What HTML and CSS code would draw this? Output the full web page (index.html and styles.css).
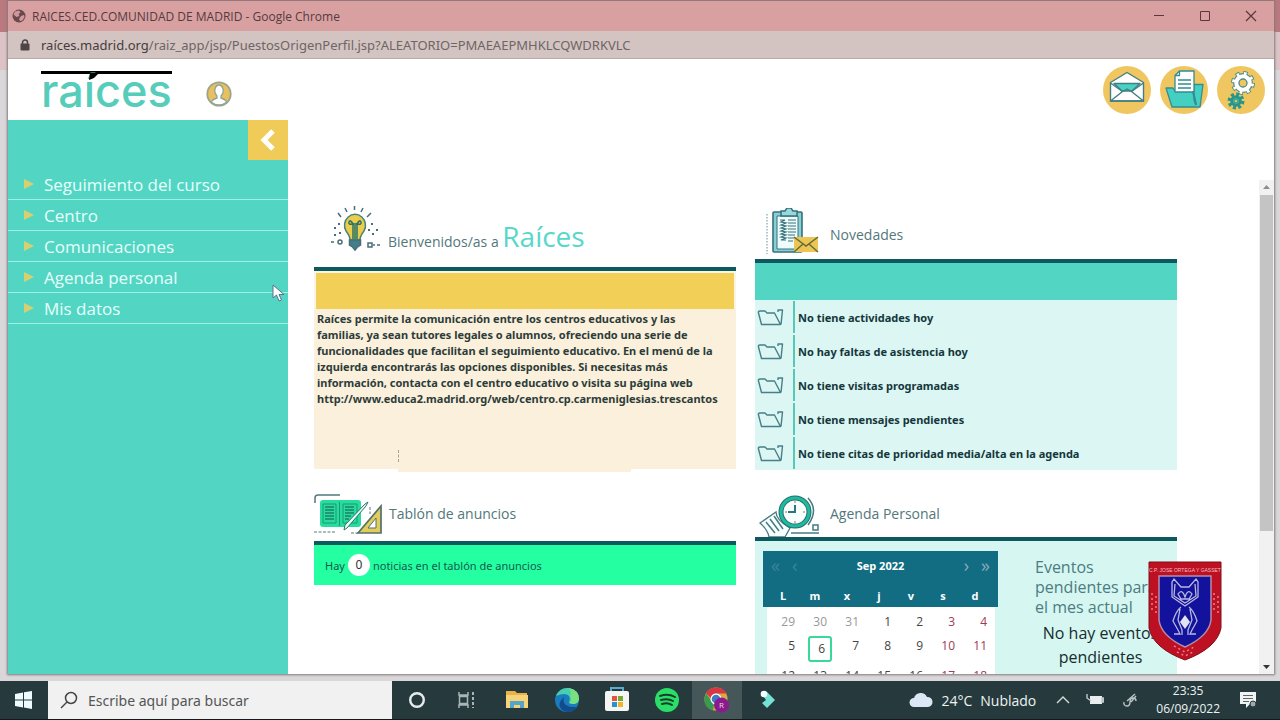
FILE: index.html
```html
<!DOCTYPE html>
<html lang="es">
<head>
<meta charset="utf-8">
<title>RAICES.CED.COMUNIDAD DE MADRID</title>
<link rel="stylesheet" href="styles.css">
</head>
<body>
<svg width="0" height="0" class="defs" aria-hidden="true">
  <symbol id="folder" viewBox="0 0 28 20"><path d="M4.500 17.500L1.500 6q-.5-2 1.500-2h5l2 2h7.500l6 11.500H7q-2 0-2.500 0zM21 5V3h4.500l-1.500 14.500" fill="none" stroke="#477f88" stroke-width="1.400" stroke-linejoin="round"/></symbol>
</svg>
<div class="desktop">
  <div class="window">
    <header class="titlebar">
      <svg class="globe" width="14" height="14" viewBox="0 0 14 14"><circle cx="7" cy="7" r="6.500" fill="#68494e"/><path d="M3 2.500l4-1 1.500 2-2 1.500 1 2-3 1-3-2.500zM9 7l3-1 .5 2-2 3.500-2.500.5-1-2z" fill="#d1989b"/></svg>
      <span class="title">RAICES.CED.COMUNIDAD DE MADRID - Google Chrome</span>
      <button class="winbtn" aria-label="Minimizar"><svg width="12" height="12"><path d="M1 5.500h10" stroke="#5d353b"/></svg></button>
      <button class="winbtn" aria-label="Maximizar"><svg width="12" height="12"><path d="M1.500 1.500h9v9h-9z" fill="none" stroke="#5d353b"/></svg></button>
      <button class="winbtn" aria-label="Cerrar"><svg width="12" height="12"><path d="M1 1l10 10M11 1L1 11" stroke="#5d353b" stroke-width="1.200"/></svg></button>
    </header>
    <div class="addressbar">
      <svg width="10" height="12" viewBox="0 0 10 12"><path d="M2.500 5V3.500a2.500 2.500 0 015 0V5" fill="none" stroke="#4e4547" stroke-width="1.500"/><rect x=".5" y="4.500" width="9" height="7" rx="1" fill="#4e4547"/></svg>
      <span class="url"><b>raíces.madrid.org</b>/raiz_app/jsp/PuestosOrigenPerfil.jsp?ALEATORIO=PMAEAEPMHKLCQWDRKVLC</span>
    </div>
    <div class="apphead">
      <a class="logo" href="#">raíces<svg class="accent" width="12" height="8" viewBox="0 0 12 8"><path d="M3 0h9l-5 5-5 2z"/></svg></a>
      <button class="user" aria-label="Usuario"><svg width="26" height="26" viewBox="0 0 26 26"><circle cx="13" cy="13" r="11.700" fill="#e8c05f" stroke="#9aa58e" stroke-width="1.800"/><path d="M5 21q2-3 6-4v-2q-3-3-2-7 1-4 4-4t4 4q1 4-2 7v2q4 1 6 4-8 6-16 0z" fill="#fff" stroke="#8fa596" stroke-width="1.300"/></svg></button>
      <nav class="tools">
        <button aria-label="Mensajes"><svg width="48" height="48" viewBox="0 0 48 48"><circle cx="24" cy="24" r="24" fill="#f0c660"/><g stroke="#417f83" stroke-width="1.400" stroke-linejoin="round"><path d="M7.500 16.500L24 6.500l16.500 10v18.500h-33z" fill="#fff"/><path d="M11 17.500h26l-8 7.500h-10z" fill="#47d2c4"/><path d="M7.500 17l12 8.500L7.500 35h33l-12-9.500 12-8.500M19.500 25.500L24 23l4.500 2.500" fill="none"/></g></svg></button>
        <button aria-label="Documentos"><svg width="48" height="48" viewBox="0 0 48 48"><circle cx="24" cy="24" r="24" fill="#f0c660"/><g stroke="#358b94" stroke-width="1.300" stroke-linejoin="round"><path d="M6 22h7l2 3h19V18.500h9L40 41H12z" fill="#43d0c1"/><path d="M15 9.500L19.500 5H34v28q0 3 2 5l-3-12H15z" fill="#fff"/><path d="M15 9.500h4.500V5M18 14h13M18 18h13M18 22h13" fill="none"/><path d="M33 25l3 14" stroke-width="2"/></g></svg></button>
        <button aria-label="Ajustes"><svg width="48" height="48" viewBox="0 0 48 48"><circle cx="24" cy="24" r="24" fill="#f0c660"/><g fill="none"><circle cx="26" cy="17" r="9.500" stroke="#54908c" stroke-width="5" stroke-dasharray="4 3.460"/><circle cx="26" cy="17" r="7" stroke="#54908c" stroke-width="6"/><circle cx="26" cy="17" r="9.500" stroke="#fff" stroke-width="3" stroke-dasharray="2.600 4.860" stroke-dashoffset="-.7"/><circle cx="26" cy="17" r="6.500" stroke="#fff" stroke-width="4.500"/><circle cx="26" cy="17" r="4" stroke="#54908c" stroke-width="1.300"/><circle cx="19" cy="35" r="6.700" stroke="#26968b" stroke-width="3.500" stroke-dasharray="3 2.260"/><circle cx="19" cy="35" r="4.300" fill="#59c8aa" stroke="#26968b" stroke-width="3"/><circle cx="19" cy="35" r="2" fill="#d7c467" stroke="#26968b"/></g></svg></button>
      </nav>
    </div>
    <div class="appbody">
      <aside class="sidebar">
        <button class="collapse" aria-label="Ocultar menú"><svg width="18" height="22" viewBox="0 0 18 22"><path d="M14 2L5 11l9 9" fill="none" stroke="#fff" stroke-width="5"/></svg></button>
        <nav class="menu">
          <a href="#">Seguimiento del curso</a>
          <a href="#">Centro</a>
          <a href="#">Comunicaciones</a>
          <a href="#">Agenda personal</a>
          <a href="#">Mis datos</a>
        </nav>
        <svg class="cursor" width="14" height="19" viewBox="0 0 14 19"><path d="M1 1v13l3.500-3 2.500 6 2.500-1-2.500-5.500h5z" fill="#fff" stroke="#58758d"/></svg>
      </aside>
      <main class="content">
        <div class="column">
          <section>
            <h2 class="head head-welcome">
              <svg class="ico-bulb" width="50" height="48" viewBox="0 0 50 48"><g fill="none" stroke="#476e78" stroke-width="1.500"><path d="M14 3l2 4M23.500 1v4M32 3l-2 4M7 8l3 4M40 8l-4 4"/><path d="M3 23h2m2-4h2m-1 9h2M3 30h2m35-11h2m-5 6h2m6 0h2m-6 4h2" stroke-width="2"/><path d="M0 37h3m39 3h2m2 0h3"/><circle cx="9" cy="37" r="2"/><path d="M37 38h4v4h-4z"/><path d="M19 35q0-4-4-9a10.500 11 0 1118 0q-4 5-4 9z" fill="#eccd4b" stroke="#46847b"/><path d="M18.500 35h11v5l-3 2-2.500 3-2.500-3-3-2z" fill="#427f8a"/><path d="M22 34V19q-5 1-4-2t4 2h4q3-5 4-2t-4 2v15M24 20v14" stroke="#287367"/></g></svg>
              <span>Bienvenidos/as a <strong>Raíces</strong></span>
            </h2>
            <div class="panel welcome">
              <div class="band"></div>
              <p>Raíces permite la comunicación entre los centros educativos y las familias, ya sean tutores legales o alumnos, ofreciendo una serie de funcionalidades que facilitan el seguimiento educativo. En el menú de la izquierda encontrarás las opciones disponibles. Si necesitas más información, contacta con el centro educativo o visita su página web http://www.educa2.madrid.org/web/centro.cp.carmeniglesias.trescantos</p>
            </div>
          </section>
          <section>
            <h2 class="head head-board">
              <svg width="70" height="44" viewBox="0 0 70 44"><path d="M1 9V4q0-3 3-3h22" fill="none" stroke="#527a7e" stroke-width="1.500"/><rect x="6" y="6" width="41" height="27" rx="3" fill="#27dd9c"/><path d="M25.500 8v24M9 10h13v19H9zM29 10h14v19H29z" fill="none" stroke="#1a9879"/><path d="M11 13h9M11 16h9M11 19h9M11 22h9M11 25h9M31 13h9M31 16h9M31 19h9M31 22h6M31 25h4" stroke="#1e7f69" stroke-width="1.500"/><path d="M0 38h21M37 39h8M56 13v7" fill="none" stroke="#547b81" stroke-dasharray="3 1.500"/><path d="M44 39L67 12v27z" fill="#e1cc5c" stroke="#52716d" stroke-width="1.700"/><path d="M54 34l8-10v10z" fill="#fff" stroke="#52716d"/><path d="M30 36l1-5L51 10l3-2-2 4-19 22z" fill="#dffff5" stroke="#356f6e"/></svg>
              <span>Tablón de anuncios</span>
            </h2>
            <div class="panel board">Hay <span class="count">0</span> noticias en el tablón de anuncios</div>
          </section>
        </div>
        <div class="column">
          <section>
            <h2 class="head head-news">
              <svg width="54" height="48" viewBox="0 0 54 48"><path d="M2 6v40" stroke="#6c8e96" stroke-dasharray="1.500 1.500"/><rect x="8" y="4" width="29" height="40" rx="1" fill="#8cced5" stroke="#34727c" stroke-width="1.600"/><path d="M12 8h21v33H12z" fill="#effcfd" stroke="#34727c"/><path d="M16 3h4l2-3h4l2 3h4v5H16z" fill="#9ad8db" stroke="#34727c" stroke-width="1.500"/><path d="M15 12h5l-4 2 5 1-5 2 5 1-5 2 5 1-5 2 5 1-5 2 5 1-5 2 5 1-5 2h5M23 12h8M23 15h8M23 18h8M23 21h8M23 24h8M23 27h7M23 30h6M23 33h5" fill="none" stroke="#38717a" stroke-width="1.200"/><path d="M29 29h24v15H29z" fill="#edc554"/><path d="M29 29l12 9 12-9M29 44l9-8m15 8l-9-8" fill="none" stroke="#606c35" stroke-width="1.400"/></svg>
              <span>Novedades</span>
            </h2>
            <div class="panel news">
              <div class="band"></div>
              <ul>
                <li><svg><use href="#folder"/></svg><span>No tiene actividades hoy</span></li>
                <li><svg><use href="#folder"/></svg><span>No hay faltas de asistencia hoy</span></li>
                <li><svg><use href="#folder"/></svg><span>No tiene visitas programadas</span></li>
                <li><svg><use href="#folder"/></svg><span>No tiene mensajes pendientes</span></li>
                <li><svg><use href="#folder"/></svg><span>No tiene citas de prioridad media/alta en la agenda</span></li>
              </ul>
            </div>
          </section>
          <section>
            <h2 class="head head-agenda">
              <svg width="62" height="42" viewBox="0 0 62 42"><path d="M1 28L17 17q0 8 14 16l-5 9H10q-1-7-9-14z" fill="#f8ffff" stroke="#477b80" stroke-width="1.300"/><path d="M7 27l9 11M11 24l9 12M15 21l9 13" stroke="#477b80" stroke-width="1.500"/><circle cx="36" cy="17" r="14" fill="#f7fffd" stroke="#246f70" stroke-width="5"/><circle cx="36" cy="17" r="14" fill="none" stroke="#20b99e" stroke-width="3"/><path d="M36 10v7h-7" fill="none" stroke="#2e757d" stroke-width="2"/><path d="M36 6v2m0 18v2M26 17h2m16 0h2" stroke="#b66"/><path d="M49 3q11 12 0 27M32 38h28M54 30h5v5h-5z" fill="none" stroke="#477b80" stroke-width="1.500"/></svg>
              <span>Agenda Personal</span>
            </h2>
            <div class="panel agenda">
              <div class="calendar">
                <div class="calhead">
                  <button aria-label="Año anterior" class="dim">«</button><button aria-label="Mes anterior" class="dim">‹</button>
                  <span>Sep 2022</span>
                  <button aria-label="Mes siguiente">›</button><button aria-label="Año siguiente">»</button>
                </div>
                <table>
                  <thead><tr><th>L</th><th>m</th><th>x</th><th>j</th><th>v</th><th>s</th><th>d</th></tr></thead>
                  <tbody>
                    <tr><td class="out">29</td><td class="out">30</td><td class="out">31</td><td>1</td><td>2</td><td class="we">3</td><td class="we">4</td></tr>
                    <tr class="current"><td>5</td><td><span class="today">6</span></td><td>7</td><td>8</td><td>9</td><td class="we">10</td><td class="we">11</td></tr>
                    <tr><td>12</td><td>13</td><td>14</td><td>15</td><td>16</td><td class="we">17</td><td class="we">18</td></tr>
                  </tbody>
                </table>
              </div>
              <div class="events">
                <h3>Eventos pendientes para el mes actual</h3>
                <p>No hay eventos pendientes</p>
              </div>
            </div>
          </section>
        </div>
      </main>
      <div class="scrollbar">
        <svg width="15" height="15"><path d="M4 9l3.500-4L11 9z" fill="#8d8d8d"/></svg>
        <div class="thumb"></div>
        <svg width="15" height="15"><path d="M4 6l3.500 4L11 6z" fill="#333"/></svg>
      </div>
    </div>
  </div>
  <svg class="crest" width="74" height="100" viewBox="0 0 74 100"><path d="M1 1h72v66q-4 20-36 32Q5 87 1 67z" fill="#bd1022" stroke="#7d101a"/><path d="M11 15h52v44q-2 16-26 27Q13 75 11 59z" fill="#12129c" stroke="#b58ea6" stroke-width="1.500"/><text x="37" y="11" text-anchor="middle" class="cresttext">C.P. JOSE ORTEGA Y GASSET</text><g fill="none" stroke="#b9b8df" stroke-width="1.300"><path d="M24 21l2-3 7 8h8l7-8 2 3v15L37 45 24 36zM27 23l-1 12 11 7 11-7-1-12M30 33q4-6 7 3 3-9 7-3l-3 5h-8zM33 46q-5 4-8 14l5 9 2 4h-6m15-27q5 4 8 14l-5 9-2 4h6M32 48l-2 11 4 10v5M42 48l2 11-4 10v5"/></g><path d="M37 54l5 7-5 7-5-7z" fill="#e1e3f2"/><g fill="none" stroke="#df8187" stroke-width="1.500" stroke-dasharray="2 3"><path d="M4 32v20M8 35v17M66 32v20M70 35v17M26 85l11 6 11-6M29 91l8 4 8-4"/></g></svg>
</div>
<footer class="taskbar">
  <button class="start" aria-label="Inicio"><svg width="18" height="18" viewBox="0 0 18 18"><path d="M0 3l8-1.500V8.500H0zM9 1.300L17 0v8.500H9zM0 9.500h8v7L0 15zM9 9.500h8V18l-8-1.500z" fill="#eefbff"/></svg></button>
  <label class="search"><svg width="18" height="18" viewBox="0 0 18 18"><circle cx="11" cy="7" r="5.500" fill="none" stroke="#444" stroke-width="1.500"/><path d="M7 11l-6 6" stroke="#444" stroke-width="1.500"/></svg><input type="text" placeholder="Escribe aquí para buscar" aria-label="Buscar"></label>
  <div class="apps">
    <button aria-label="Cortana"><svg width="18" height="18"><circle cx="9" cy="9" r="6.800" fill="none" stroke="#e6ebeb" stroke-width="2.400"/></svg></button>
    <button aria-label="Vista de tareas"><svg width="20" height="18"><path d="M2 1v3h9V1M2 17v-3h9v3M2.500 5.500h8v7h-8z" fill="none" stroke="#aab5b6" stroke-width="1.500"/><path d="M16 1v16" stroke="#aab5b6" stroke-width="2" stroke-dasharray="3 2"/></svg></button>
    <button aria-label="Explorador"><svg width="24" height="20"><path d="M1 1h9l2 2h10v15H1z" fill="#e9b24b"/><path d="M1 5h22v13H1z" fill="#f7d477"/><path d="M5 18v-7h14v7h-4v-3H9v3z" fill="#55a4ca"/></svg></button>
    <button aria-label="Edge"><svg width="26" height="26" viewBox="0 0 26 26"><circle cx="13" cy="13" r="12" fill="#197dbd"/><path d="M2 9Q6 0 15 1q10 2 10 11-1 7-10 4 3-8-4-9-5 0-9 2z" fill="#48cfae"/><path d="M15 1q10 2 10 11-1 7-10 4 4-3 1-7 2-3-1-8z" fill="#79df80"/><path d="M10 10q-3 11 13 10-7 8-15 3-6-6 2-13z" fill="#124c8c"/></svg></button>
    <button aria-label="Microsoft Store"><svg width="26" height="26"><path d="M7 5V1h12v4" fill="none" stroke="#55acd1" stroke-width="2"/><rect x="1" y="4" width="24" height="20" rx="2" fill="#f5f5f3"/><path d="M8 9h5v5H8z" fill="#df583b"/><path d="M14 9h5v5h-5z" fill="#70ab37"/><path d="M8 15h5v5H8z" fill="#2c91c7"/><path d="M14 15h5v5h-5z" fill="#edb52c"/></svg></button>
    <button aria-label="Spotify"><svg width="26" height="26"><circle cx="13" cy="13" r="12" fill="#2ade67"/><path d="M6 9q8-3 15 1M7 13q7-2 12 1M8 17q6-2 10 1" fill="none" stroke="#163e29" stroke-width="2" stroke-linecap="round"/></svg></button>
    <button class="active" aria-label="Chrome"><svg width="28" height="28" viewBox="0 0 28 28"><circle cx="13" cy="13" r="11.500" fill="#d8aa42"/><path d="M3 7q4-6 10-5.500 7 0 11 6H13q-4 0-5 5z" fill="#d83645"/><path d="M3 7l8 12-1 5.500Q0 21 1.500 12z" fill="#389b50"/><circle cx="13" cy="13" r="5.500" fill="#fff"/><circle cx="13" cy="13" r="4.300" fill="#4277c9"/><circle cx="18.500" cy="19" r="7.500" fill="#8b1a91"/><text x="18.500" y="22" text-anchor="middle" class="badge">R</text></svg></button>
    <button aria-label="Filmora"><svg width="22" height="22"><path d="M7 7l4-4 8 8-8 8-5-5 4-3z" fill="#74e2d4"/><circle cx="8" cy="5" r="3.300" fill="#f2ffff"/></svg></button>
  </div>
  <div class="tray">
    <button class="weather"><svg width="24" height="16"><path d="M5 15a4.500 4.500 0 010-9 7 7 0 0113-1 5 5 0 011 10z" fill="#dce7f6"/></svg><span>24°C</span><span>Nublado</span></button>
    <svg class="chev" width="14" height="8"><path d="M1 7l6-6 6 6" fill="none" stroke="#d6dddd" stroke-width="1.400"/></svg>
    <svg class="batt" width="18" height="14"><rect x="4" y="3" width="12" height="8" fill="#e8eeee"/><path d="M16 5h1.500v4H16zM1 1v4l4 3" fill="none" stroke="#bfc9c9" stroke-width="1.400"/></svg>
    <svg class="link" width="16" height="16"><path d="M2 10a3 3 0 003 4q3 0 3-4t3-4 3 3M5 9l8-7M9 10l5-6" fill="none" stroke="#b7c3c4" stroke-width="1.400"/></svg>
    <div class="clock"><span>23:35</span><span>06/09/2022</span></div>
    <button class="notes" aria-label="Notificaciones"><svg width="18" height="18"><path d="M1 1h16v12h-6l-4 4v-4H1z" fill="#eff3f3"/><path d="M4 4.500h10M4 7.500h10M4 10.500h6" stroke="#596668"/><circle cx="14" cy="13" r="3" fill="#9da8aa" stroke="#26383b"/></svg></button>
  </div>
</footer>
</body>
</html>
```
FILE: styles.css
```css
* { box-sizing: border-box; }
body {
  margin: 0;
  height: 100vh;
  display: flex;
  flex-direction: column;
  overflow: hidden;
  font-family: "Open Sans", "Noto Sans", sans-serif;
  color: #223d3d;
}
button { border: 0; background: none; padding: 0; margin: 0; font: inherit; color: inherit; display: flex; align-items: center; justify-content: center; }
a { color: inherit; text-decoration: none; }
h2, h3, p, ul { margin: 0; padding: 0; font-weight: 400; }
svg { display: block; flex: none; }
.defs { position: absolute; }

.desktop {
  position: relative;
  flex: 1;
  min-height: 0;
  padding: 1px 6px 7px 8px;
  background: linear-gradient(#b9797e 0 32px, #dcc3c6 32px 70px, #d9d7d9 70px);
}
.window { height: 100%; display: flex; flex-direction: column; background: #fff; box-shadow: 0 0 2px 1px #85797c; }
.titlebar { height: 30px; display: flex; align-items: center; gap: 6px; padding: 0 3px 0 4px; background: #d9a0a1; }
.title { flex: 1; font-size: 12px; color: #543b3e; }
.winbtn { width: 40px; height: 30px; }
.addressbar { height: 28px; display: flex; align-items: center; gap: 11px; padding-left: 12px; background: #d3c4c1; border-bottom: 1px solid #b7abaa; }
.url { font-family: "Noto Sans", sans-serif; font-size: 13px; color: #6f6565; white-space: nowrap; }
.url b { font-weight: 400; color: #463c3e; }

.apphead { height: 61px; display: flex; align-items: center; padding: 0 9px 0 33px; }
.logo { position: relative; height: 38px; border-top: 3px solid #000; font: 500 45px/34px Inter, sans-serif; color: #56cdbb; }
.accent { position: absolute; left: 46px; top: -1px; }
.user { margin: 8px 0 0 34px; }
.tools { display: flex; gap: 9px; margin-left: auto; }

.appbody { flex: 1; min-height: 0; display: flex; }
.sidebar { position: relative; width: 280px; flex: none; background: #53d5c4; }
.collapse { width: 40px; height: 40px; margin-left: auto; background: #f1cb57; }
.menu { padding-top: 9px; display: flex; flex-direction: column; }
.menu a { height: 31px; padding-left: 16px; display: flex; align-items: center; gap: 10px; border-bottom: 1px solid #9cf0e4; font-size: 17px; font-weight: 500; color: #e6fffb; }
.menu a::before { content: ""; border: 5px solid transparent; border-left: 10px solid #d8cf70; border-right: 0; }
.cursor { position: absolute; right: 2px; top: 164px; }

.content { flex: 1; min-width: 0; overflow: hidden; display: grid; grid-template-columns: minmax(0, 1fr) minmax(0, 1fr); gap: 19px; padding: 60px 82px 0 26px; }
.head { display: flex; align-items: center; font-size: 14px; color: #53777b; }
.head-welcome { height: 87px; padding: 0 0 0 17px; gap: 7px; }
.head-welcome span { padding-top: 25px; }
.head-welcome .ico-bulb { margin-top: 11px; }
.head-welcome strong { font-weight: 400; font-size: 28px; line-height: 30px; color: #56d8cb; }
.head-board { height: 72px; gap: 5px; padding-top: 22px; }
.head-board span { margin-bottom: 6px; }
.head-news { height: 79px; gap: 11px; padding: 24px 0 0 10px; }
.head-news span { margin-top: 6px; }
.head-agenda { height: 67px; gap: 9px; padding: 24px 0 0 4px; }
.head-agenda span { margin-bottom: 4px; }
.panel { border-top: 4px solid #0c5960; }
.welcome { position: relative; height: 202px; background: #faf0dc; }
.welcome::after { content: ""; position: absolute; left: 20%; right: 25%; bottom: -3px; height: 4px; background: #faf0dc; }
.welcome::before { content: ""; position: absolute; left: 20%; bottom: 7px; height: 12px; border-left: 1px dashed #a8a196; }
.welcome .band { height: 38px; border: 2px solid #fcf5e4; border-bottom: 0; background: #f2cf57; }
.welcome p { padding: 2px 14px 2px 3px; font: 700 11px/16px "Noto Sans", sans-serif; color: #2d3c39; }
.board { height: 44px; display: flex; align-items: center; gap: 3px; padding-left: 11px; background: #24ffa2; font: 11px "Noto Sans", sans-serif; color: #0f5c4c; }
.count { width: 22px; height: 22px; border-radius: 50%; background: #fff; font-size: 12px; color: #333; line-height: 22px; text-align: center; }
.news { background: #dbf6f3; }
.news .band { height: 37px; background: #53d5c4; }
.news ul { list-style: none; }
.news li { height: 34px; display: flex; align-items: center; font: 700 11px "Noto Sans", sans-serif; color: #15373b; }
.news li svg { width: 28px; height: 20px; margin: 0 8px 0 2px; }
.news li span { height: 32px; line-height: 34px; padding-left: 3px; border-left: 2px solid #55c9b6; }
.agenda { display: flex; gap: 37px; padding: 10px 11px 0 8px; height: 180px; background: #d5f6f1; }
.calendar {
  width: 235px;
  flex: none;
  background: linear-gradient(#126d83, #126d83) 0 0 / 100% 56px no-repeat, linear-gradient(#fff, #fff) 4px 0 / 228px 100% no-repeat;
}
.calhead { height: 28px; display: flex; align-items: center; gap: 12px; padding: 0 8px; color: #8ba9b7; font-size: 18px; }
.calhead span { flex: 1; text-align: center; font-size: 11px; font-weight: 700; color: #fff; }
.calhead .dim { color: #39869a; }
table { width: 224px; margin-left: 4px; border-collapse: collapse; table-layout: fixed; font-size: 12px; }
thead { color: #fff; }
th { height: 28px; padding: 4px 0 0; font-size: 11px; }
td { height: 24px; padding: 6px 4px 0 0; text-align: right; line-height: 18px; vertical-align: top; color: #444; }
td.out { color: #999; }
td.we { color: #9b4053; }
.current td { height: 30px; }
.today { display: block; height: 26px; margin: -1px -5px -2px 9px; padding-right: 5px; border: 2px solid #39d999; border-radius: 3px; line-height: 22px; }
.events { padding-top: 6px; }
.events h3 { font-size: 16px; line-height: 20px; color: #4c7c80; }
.events p { margin-top: 4px; font-size: 16px; line-height: 24px; text-align: center; color: #172c2d; }
.scrollbar { width: 15px; margin-top: 60px; display: flex; flex-direction: column; background: #f1f1f1; }
.thumb { height: 336px; margin: 0 1px auto; background: #c4c4c4; }
.crest { position: absolute; right: 58px; bottom: 20px; }
.cresttext { font: 5px "Liberation Sans", sans-serif; fill: #f2bdc1; }

.taskbar { height: 39px; display: flex; background: #263a3d; color: #edf3f3; border-bottom: 1px solid #111b1d; }
.start { width: 48px; }
.search { width: 344px; display: flex; align-items: center; gap: 8px; padding-left: 12px; background: #f1f1f1; }
.search input { flex: 1; min-width: 0; border: 0; outline: 0; background: none; font: 14px "Noto Sans", sans-serif; color: #444; }
.search input::placeholder { color: #555; opacity: 1; }
.apps { display: flex; }
.apps button { width: 50px; }
.apps .active { background: #465759; }
.badge { font: 8px "Open Sans", sans-serif; fill: #edc; }
.tray { flex: 1; display: flex; align-items: center; justify-content: flex-end; }
.weather { gap: 8px; font-size: 14px; }
.chev { margin-left: 20px; }
.batt { margin-left: 16px; }
.link { margin-left: 18px; }
.clock { display: flex; flex-direction: column; align-items: center; margin-left: 18px; font-size: 12px; line-height: 18px; }
.notes { margin: 0 23px 0 19px; }
```
